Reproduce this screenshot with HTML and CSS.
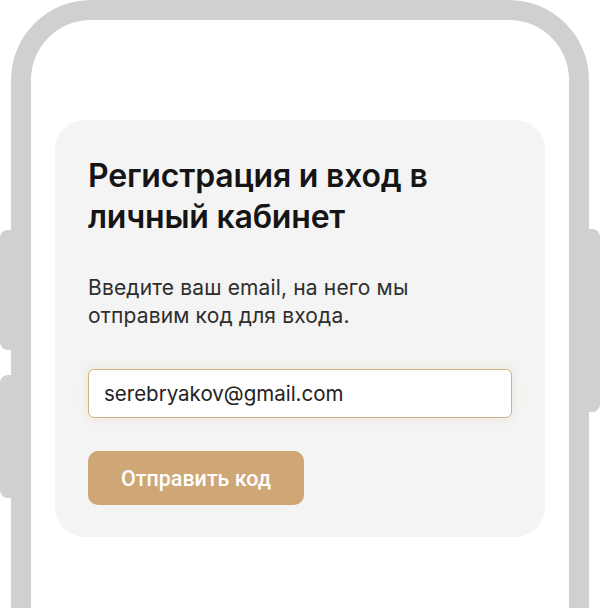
FILE: index.html
```html
<!DOCTYPE html>
<html lang="ru">
<head>
    <meta charset="UTF-8">
    <meta name="viewport" content="width=device-width, initial-scale=1.0">
    <title>Вход</title>
    <link rel="stylesheet" href="styles.css">
</head>
<body>

    <!-- Phone Frame -->
    <div class="phone">
        <span class="side-btn left-top"></span>
        <span class="side-btn left-bottom"></span>
        <span class="side-btn right"></span>

        <div class="screen">
            <!-- Login Card -->
            <div class="card">
                <h1>Регистрация и вход в личный кабинет</h1>
                <p>Введите ваш email, на него мы отправим код для входа.</p>
                <form class="login-form" onsubmit="event.preventDefault()">
                    <input type="email" value="serebryakov@gmail.com">
                    <button type="submit">Отправить код</button>
                </form>
            </div>
        </div>
    </div>

</body>
</html>
```

FILE: styles.css
```css
/* Page */
body {
    margin: 0;
    background: #ffffff;
    font-family: 'Inter', 'Noto Sans', sans-serif;
    height: 608px;
    overflow: hidden;
}

/* Phone Frame */
.phone {
    position: relative;
    margin: 0 11px;
    height: 620px;
    border: 20px solid #d0d0d0;
    border-bottom: none;
    border-radius: 80px 80px 0 0;
    box-sizing: border-box;
}

.side-btn {
    position: absolute;
    width: 14px;
    background: #d0d0d0;
}

.side-btn.left-top { left: -31px; top: 210px; height: 120px; border-radius: 8px 0 0 8px; }
.side-btn.left-bottom { left: -31px; top: 355px; height: 123px; border-radius: 8px 0 0 8px; }
.side-btn.right { right: -31px; top: 209px; height: 183px; border-radius: 0 8px 8px 0; }

/* Screen */
.screen {
    padding: 100px 24px 0;
}

/* Card */
.card {
    background: #f4f4f4;
    border-radius: 30px;
    padding: 35px 33px 32px;
}

.card h1 {
    margin: 0;
    font-size: 32px;
    font-weight: 600;
    line-height: 41px;
    color: #151515;
    letter-spacing: -0.2px;
    max-width: 380px;
}

.card p {
    margin: 37px 0 0;
    font-size: 21px;
    line-height: 28px;
    color: #2e2e2e;
    letter-spacing: 0.15px;
    max-width: 345px;
}

/* Form */
.login-form {
    display: flex;
    flex-direction: column;
    align-items: flex-start;
    gap: 33px;
    margin-top: 39px;
}

.login-form input {
    box-sizing: border-box;
    width: 100%;
    height: 49px;
    padding: 0 15px;
    border: 1px solid #d3b186;
    border-radius: 6px;
    background: #ffffff;
    box-shadow: 0 0 10px rgba(207, 166, 118, 0.25);
    font-family: 'Inter', sans-serif;
    font-size: 20.5px;
    color: #222222;
    outline: none;
}

.login-form button {
    width: 216px;
    height: 54px;
    border: none;
    border-radius: 10px;
    background: #cfa676;
    color: #ffffff;
    font-family: 'Roboto', sans-serif;
    font-size: 21.5px;
    font-weight: 500;
    cursor: pointer;
}
```
